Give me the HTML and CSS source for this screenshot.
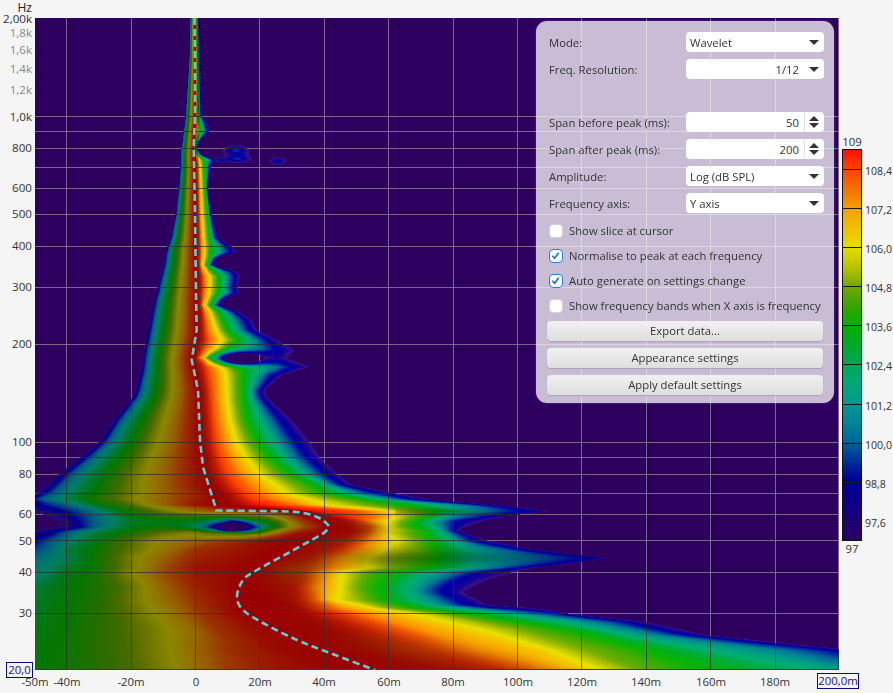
FILE: index.html
```html
<!DOCTYPE html>
<html lang="en">
<head>
<meta charset="utf-8">
<title>Spectrogram</title>
<link rel="stylesheet" href="styles.css">
</head>
<body>
<div class="app">
  <div class="corner">Hz</div>
  <div class="top-gap"></div>
  <div class="top-gap"></div>

  <div class="y-axis">
    <span class="ytick" style="top:1px">2,00k</span>
    <span class="ytick minor" style="top:15px">1,8k</span>
    <span class="ytick minor" style="top:32px">1,6k</span>
    <span class="ytick minor" style="top:51px">1,4k</span>
    <span class="ytick minor" style="top:72px">1,2k</span>
    <span class="ytick" style="top:99px">1,0k</span>
    <span class="ytick" style="top:130px">800</span>
    <span class="ytick" style="top:170px">600</span>
    <span class="ytick" style="top:196px">500</span>
    <span class="ytick" style="top:228px">400</span>
    <span class="ytick" style="top:269px">300</span>
    <span class="ytick" style="top:326px">200</span>
    <span class="ytick" style="top:424px">100</span>
    <span class="ytick" style="top:456px">80</span>
    <span class="ytick" style="top:496px">60</span>
    <span class="ytick" style="top:523px">50</span>
    <span class="ytick" style="top:554px">40</span>
    <span class="ytick" style="top:595px">30</span>
  </div>

  <div class="plot">
    <canvas id="heat" class="heat" width="804" height="652"></canvas>
    <form class="panel">
      <div class="field"><span>Mode:</span><div class="combo"><span class="combo-text">Wavelet</span><i class="arrow"></i></div></div>
      <div class="field"><span>Freq. Resolution:</span><div class="combo"><span class="combo-text end">1/12</span><i class="arrow"></i></div></div>
      <div class="field"></div>
      <div class="field"><span>Span before peak (ms):</span><div class="combo"><span class="combo-text end">50</span><i class="spin"></i></div></div>
      <div class="field"><span>Span after peak (ms):</span><div class="combo"><span class="combo-text end">200</span><i class="spin"></i></div></div>
      <div class="field"><span>Amplitude:</span><div class="combo"><span class="combo-text">Log (dB SPL)</span><i class="arrow"></i></div></div>
      <div class="field"><span>Frequency axis:</span><div class="combo"><span class="combo-text">Y axis</span><i class="arrow"></i></div></div>
      <div class="checks">
        <div class="check"><i class="box"></i>Show slice at cursor</div>
        <div class="check"><i class="box on"><svg viewBox="0 0 14 14"><path d="M3 7.4 6 10.6l5-7" /></svg></i>Normalise to peak at each frequency</div>
        <div class="check"><i class="box on"><svg viewBox="0 0 14 14"><path d="M3 7.4 6 10.6l5-7" /></svg></i>Auto generate on settings change</div>
        <div class="check"><i class="box"></i>Show frequency bands when X axis is frequency</div>
      </div>
      <div class="buttons">
        <div class="btn">Export data...</div>
        <div class="btn">Appearance settings</div>
        <div class="btn">Apply default settings</div>
      </div>
    </form>
  </div>

  <div class="legend">
    <div class="legend-end">109</div>
    <div class="legend-bar">
      <div class="legend-first"></div>
      <div class="legend-cell"><span>108,4</span></div>
      <div class="legend-cell"><span>107,2</span></div>
      <div class="legend-cell"><span>106,0</span></div>
      <div class="legend-cell"><span>104,8</span></div>
      <div class="legend-cell"><span>103,6</span></div>
      <div class="legend-cell"><span>102,4</span></div>
      <div class="legend-cell"><span>101,2</span></div>
      <div class="legend-cell"><span>100,0</span></div>
      <div class="legend-cell"><span>98,8</span></div>
      <div class="legend-cell last"><span>97,6</span></div>
    </div>
    <div class="legend-end">97</div>
  </div>

  <div class="cursor-cell"><span class="cursor-box y-cursor">20,0</span></div>
  <div class="x-axis">
    <span class="xtick" style="left:0">-50m</span>
    <span class="xtick" style="left:32px">-40m</span>
    <span class="xtick" style="left:96px">-20m</span>
    <span class="xtick" style="left:161px">0</span>
    <span class="xtick" style="left:225px">20m</span>
    <span class="xtick" style="left:289px">40m</span>
    <span class="xtick" style="left:354px">60m</span>
    <span class="xtick" style="left:418px">80m</span>
    <span class="xtick" style="left:483px">100m</span>
    <span class="xtick" style="left:547px">120m</span>
    <span class="xtick" style="left:611px">140m</span>
    <span class="xtick" style="left:676px">160m</span>
    <span class="xtick" style="left:740px">180m</span>
    <span class="cursor-box x-cursor">200,0m</span>
  </div>
</div>
<script src="app.js"></script>
</body>
</html>
```

FILE: styles.css
```css
* { box-sizing: border-box; }
html, body { margin: 0; padding: 0; }
body { background: #f5f5f5; font-family: "Open Sans", "Noto Sans", sans-serif; font-size: 11.3px; color: #333; }

.app {
  width: 893px;
  height: 693px;
  display: grid;
  grid-template-columns: 35px 804px 54px;
  grid-template-rows: 18px 652px 23px;
  background: #f5f5f5;
  overflow: hidden;
}

.corner { text-align: right; padding-right: 3px; font-size: 12px; line-height: 15px; color: #222; }

.y-axis { position: relative; }
.ytick { position: absolute; right: 3px; line-height: 14px; color: #333; white-space: nowrap; font-size: 11.6px; transform: translateY(-7px); }
.ytick.minor { color: #8a8a8a; }

.plot { position: relative; background: #2d005f; }
.heat { display: block; width: 804px; height: 652px; }

.panel {
  position: absolute;
  left: 501px;
  top: 3px;
  width: 298px;
  height: 382px;
  margin: 0;
  padding: 11px 11px 8px;
  display: flex;
  flex-direction: column;
  border-radius: 11px;
  background: rgba(255, 255, 255, 0.74);
  box-shadow: 0 0 2px rgba(255, 255, 255, 0.3);
}

.field {
  display: grid;
  grid-template-columns: 139px 138px;
  align-items: center;
  height: 20px;
  margin-bottom: 7px;
  padding-left: 2px;
  margin-left: 0;
  white-space: nowrap;
}
.field > span { color: #333; position: relative; top: 0.5px; }

.combo {
  position: relative;
  height: 20px;
  width: 138px;
  margin-left: -2px;
  background: #fff;
  border-radius: 4px;
  display: flex;
  align-items: center;
  padding: 0 25px 0 4px;
}
.combo-text { flex: 1; color: #333; }
.combo-text.end { text-align: right; }

.arrow {
  position: absolute;
  right: 5px;
  top: 8px;
  width: 0;
  height: 0;
  border-left: 5px solid transparent;
  border-right: 5px solid transparent;
  border-top: 5px solid #333;
}

.spin {
  position: absolute;
  right: 0;
  top: 0;
  width: 20px;
  height: 20px;
  border-left: 1px solid #e2e2e2;
}
.spin::before, .spin::after {
  content: "";
  position: absolute;
  left: 4px;
  border-left: 5px solid transparent;
  border-right: 5px solid transparent;
}
.spin::before { top: 4px; border-bottom: 5px solid #333; }
.spin::after { top: 11px; border-top: 5px solid #333; }

.checks { display: flex; flex-direction: column; margin-top: -2px; margin-bottom: 3px; }
.check {
  display: flex;
  align-items: center;
  height: 25px;
  padding-left: 2px;
  color: #333;
  white-space: nowrap;
}
.box {
  flex: none;
  width: 14px;
  height: 14px;
  margin-right: 6px;
  background: #fff;
  border: 1px solid #d6d0dc;
  border-radius: 4px;
}
.box.on { border: 1.5px solid #2f7fd0; background: #f4f9fe; }
.box svg { display: block; width: 11px; height: 11px; }
.box path { fill: none; stroke: #1f6fc0; stroke-width: 2; }

.buttons { display: flex; flex-direction: column; gap: 7px; }
.btn {
  height: 20px;
  line-height: 20px;
  text-align: center;
  color: #333;
  border-radius: 4px;
  background: linear-gradient(#f1f1f1, #dedede);
  box-shadow: 0 1px 1px rgba(120, 110, 130, 0.35);
}

.legend { padding-left: 3px; position: relative; }
.legend-end { width: 20px; text-align: center; line-height: 14px; color: #333; font-size: 11.4px; }
.legend-end:first-child { margin-top: 117px; }
.legend-bar {
  width: 20px;
  height: 392px;
  border: 1px solid #111;
  display: flex;
  flex-direction: column;
  background: linear-gradient(
    #ff1000 0%, #fa4600 5%, #f57000 10%, #f5a000 15%, #f0c000 20%, #e4de00 25%,
    #b8c400 30%, #70a800 35%, #38a400 40%, #00b000 45%, #00a828 50%,
    #00a854 55%, #00a878 60%, #009a90 65%, #008498 70%, #006498 75%,
    #002c98 80%, #000098 85%, #0a0088 90%, #1c0074 95%, #28006a 100%);
}
.legend-first { flex: 0 0 19px; }
.legend-cell { flex: 0 0 39.1px; border-top: 1px solid #1a1a1a; position: relative; }
.legend-cell span { position: absolute; left: 22px; top: -6px; line-height: 14px; color: #333; font-size: 10.6px; white-space: nowrap; }
.legend-cell.last { flex: 1 1 auto; }
.legend-end:last-child { margin-top: 1px; }

.cursor-cell { position: relative; }
.cursor-box {
  position: absolute;
  border: 1px solid #0a0a80;
  color: #14148a;
  line-height: 14px;
  text-align: center;
  white-space: nowrap;
  font-size: 11.4px;
}
.y-cursor { left: 6px; top: -8px; width: 27px; height: 16px; background: #f5f5f5; }
.x-axis { position: relative; }
.xtick { position: absolute; top: 5px; line-height: 14px; transform: translateX(-50%); white-space: nowrap; color: #333; font-size: 11.4px; }
.x-cursor { left: 782px; top: 3px; width: 42px; height: 16px; background: #f5f5f5; }
```

FILE: app.js
```javascript
// Spectrogram field: each key row gives left edge, ridge, mid contour and right edge
// (plot values in dB, x and y in page pixels; the canvas starts at 35,18).
const X0 = 35, Y0 = 18, W = 804, H = 652;

const stops = [
  [97, 50, 12, 112], [97.3, 52, 16, 140], [97.6, 36, 6, 140], [98.2, 10, 0, 155], [98.8, 0, 0, 165], [99.4, 0, 50, 160],
  [100, 0, 100, 150], [100.6, 0, 135, 145], [101.2, 0, 160, 130], [101.8, 0, 175, 110], [102.4, 0, 172, 70],
  [103, 0, 175, 30], [103.6, 10, 180, 0], [104.2, 60, 172, 0], [104.8, 110, 175, 0], [105.4, 180, 195, 0],
  [106, 230, 225, 0], [106.6, 245, 190, 0], [107.2, 250, 150, 0], [107.8, 255, 90, 0], [108.4, 255, 45, 0], [109, 255, 0, 0]
];

function colour(v) {
  if (v >= 109) return stops[stops.length - 1];
  for (let i = 1; i < stops.length; i++) {
    if (v <= stops[i][0]) {
      const a = stops[i - 1], b = stops[i], t = (v - a[0]) / (b[0] - a[0]);
      return [0, a[1] + (b[1] - a[1]) * t, a[2] + (b[2] - a[2]) * t, a[3] + (b[3] - a[3]) * t];
    }
  }
  return stops[stops.length - 1];
}

function row(y, L, P, C, R, left, right) {
  const pts = [];
  if (left) {
    left.forEach(p => pts.push(p));
  } else {
    for (let i = 0; i < 10; i++) {
      const f = i / 10;
      pts.push([L + f * (P - L), 97 + 12 * Math.pow(f, 0.55)]);
    }
  }
  pts.push([P, 109]);
  if (right) {
    right.forEach(p => pts.push(p));
  } else {
    for (let i = 1; i <= 6; i++) {
      const f = i / 6;
      pts.push([P + f * (C - P), 109 - 5.5 * Math.pow(f, 1.4)]);
    }
  }
  pts.push([R, 97]);
  return { y, L, P, C, R, pts };
}

const keys = [
  row(18, 190, 194.5, 197, 199), row(60, 189, 194.7, 197.5, 200), row(116, 185, 195, 198, 202),
  row(122, 184.5, 194.7, 198.5, 207), row(131, 183, 194, 200, 210), row(143, 181.5, 193.7, 196, 198),
  row(148, 180.5, 193.5, 195.5, 197), row(155, 180, 193.5, 198, 202), row(160, 180, 193.7, 203, 217),
  row(165, 180, 194, 204, 212), row(188, 178, 194.3, 205, 208), row(214, 175, 194.5, 207, 212),
  row(238, 170, 195, 209, 218), row(246, 167, 195, 210, 232), row(252, 165, 195.2, 210, 237),
  row(258, 164, 195.3, 209, 217), row(265, 163, 195.4, 207, 213), row(272, 161, 195.5, 213, 237),
  row(276, 160, 195.6, 218, 240), row(287, 157, 196, 218, 238), row(293, 156, 196, 217, 240),
  row(298, 154, 196.3, 214, 227), row(305, 152.5, 196.5, 210, 220), row(312, 151, 196.7, 218, 240),
  row(320, 149.5, 196.8, 222, 252), row(330, 147.5, 196.7, 227, 257), row(340, 145.5, 195.5, 237, 277),
  row(350, 143.5, 193, 227, 295), row(358, 142, 192, 212, 287), row(367, 141, 193, 243, 310),
  row(375, 139, 195, 243, 283), row(390, 135, 198, 243, 265), row(397, 132, 198.5, 243, 267),
  row(420, 113, 199.5, 247, 292), row(442, 98, 200, 257, 310), row(457, 80, 201.5, 270, 320),
  row(474, 58, 204, 290, 338), row(485, 46, 208, 313, 352), row(493, 36, 215, 325, 395),
  row(499, 22, 216, 360, 428),
  row(505, 35, 216, 410, 533,
    [[35, 98.5], [66, 100.5], [97, 103], [130, 105], [163, 107], [197, 108.7]],
    [[260, 108.8], [300, 107.4], [325, 106], [350, 105.4], [388, 104], [410, 103.3], [433, 102], [483, 100.5], [517, 98.8]]),
  row(511, 35, 297, 440, 553,
    [[35, 97.3], [50, 97.8], [66, 99], [90, 100.8], [110, 102.5], [130, 103.8], [163, 105.4], [197, 107], [250, 108.4]],
    [[333, 108.5], [367, 107.5], [388, 106.3], [410, 105], [433, 103.7], [453, 102.5], [483, 100.8], [517, 99], [533, 98.4]]),
  row(516, 35, 305, 427, 510,
    [[35, 96.8], [60, 97.5], [75, 99], [100, 101], [130, 103.3], [163, 104.3], [197, 104.5], [230, 104.8], [263, 105.2], [285, 107]],
    [[340, 108.7], [377, 107.5], [388, 106.8], [407, 105.2], [427, 103.6], [450, 101], [467, 100], [487, 99]]),
  row(522, 35, 320, 413, 477,
    [[35, 96.5], [66, 97.2], [80, 99], [95, 100.6], [113, 101.5], [130, 102.8], [163, 103.2], [190, 103], [205, 102.2], [220, 100.5], [235, 97.5], [255, 102], [270, 103.5], [285, 105.5], [300, 107.5]],
    [[345, 108.8], [367, 107.5], [388, 106], [413, 103.6], [433, 101], [450, 99], [462, 98.2]]),
  row(527, 35, 328, 412, 465,
    [[35, 96.5], [66, 97.2], [78, 98.4], [95, 100.5], [113, 102], [130, 103], [163, 103.5], [190, 102.5], [205, 100.5], [215, 97.5], [230, 92], [250, 97.5], [262, 101.5], [275, 103.5], [290, 106], [305, 107.5]],
    [[350, 108.8], [373, 107.6], [388, 106], [410, 103.8], [427, 102.6], [440, 100.8], [453, 98.8]]),
  row(531, 35, 325, 427, 457,
    [[35, 97.2], [50, 98], [66, 99.6], [80, 101], [97, 102], [130, 103.7], [163, 104.8], [190, 105], [200, 104.2], [215, 102], [230, 97.5], [250, 100.5], [265, 104.5], [280, 106.5], [297, 108]],
    [[350, 108.9], [367, 108], [388, 106], [407, 104.8], [427, 103.4], [443, 101], [452, 98.8]]),
  row(533, 35, 323, 425, 463,
    [[35, 97.5], [50, 98.5], [63, 100], [80, 101.5], [97, 102.5], [130, 104], [163, 105.2], [190, 105.8], [217, 105], [250, 104.5], [265, 105.3], [280, 107], [297, 108.5]],
    [[350, 108.8], [367, 107.8], [388, 106], [407, 104.6], [427, 103.4], [443, 101.3], [455, 99.5]]),
  row(541, 35, 300, 430, 489,
    [[35, 98.7], [47, 100], [67, 101.5], [97, 103.3], [130, 105], [163, 106.3], [190, 107], [230, 108], [263, 108.8]],
    [[350, 108.3], [377, 107], [397, 106], [420, 104.5], [443, 102.5], [460, 100.5], [470, 99]]),
  row(550, 35, 275, 430, 533,
    [[35, 100], [47, 100.6], [67, 102.4], [97, 103.8], [130, 105.2], [163, 106.5], [197, 108]],
    [[333, 108.5], [367, 107], [388, 105.8], [417, 104.8], [440, 103.3], [473, 101.5], [500, 100.4], [527, 98.3]]),
  row(558, 35, 265, 440, 613,
    [[35, 100.8], [66, 102], [97, 103.8], [130, 105.6], [163, 107], [197, 108.3]],
    [[309, 108.5], [333, 107.5], [367, 106], [390, 105], [417, 104.3], [443, 103.3], [467, 102], [507, 101], [533, 100.3], [567, 99.3], [593, 98.5]]),
  row(568, 35, 255, 430, 535,
    [[35, 101.3], [66, 102.7], [97, 103.8], [130, 105.5], [163, 107.4], [197, 108.6]],
    [[300, 108], [333, 107.3], [343, 107], [367, 106], [388, 105], [417, 104], [443, 103], [473, 101.5], [500, 100], [517, 98.8]]),
  row(572, 35, 250, 395, 515,
    [[35, 101.5], [50, 102], [67, 103.2], [97, 103.9], [125, 105.6], [163, 107.5], [197, 108.6]],
    [[263, 108.8], [300, 108], [333, 106.6], [350, 105.5], [377, 104], [400, 103.5], [417, 102], [440, 101], [460, 100], [480, 98.5]]),
  row(587, 35, 237, 378, 472,
    [[35, 102.5], [66, 103.4], [97, 104], [130, 105.2], [163, 107], [197, 108.3]],
    [[263, 108.9], [297, 108.5], [313, 107.5], [333, 106.6], [350, 105.2], [377, 103.5], [400, 102.2], [417, 101], [440, 99], [457, 98]]),
  row(600, 35, 238, 385, 478,
    [[35, 102.7], [66, 103.5], [97, 104], [140, 105.8], [163, 106.7], [197, 108]],
    [[270, 109], [300, 108.5], [317, 107.5], [333, 106.2], [360, 105], [383, 103.6], [410, 102], [433, 100.6], [450, 99.3], [465, 98.3]]),
  row(608, 35, 243, 420, 533,
    [[35, 102.9], [66, 103.5], [97, 104.1], [130, 105.2], [163, 106.4], [197, 107.8], [230, 108.8]],
    [[297, 108.8], [333, 107.5], [367, 106.3], [388, 105], [417, 103.5], [443, 102], [467, 100.6], [493, 99], [517, 98]]),
  row(613, 35, 248, 455, 570,
    [[35, 103], [66, 103.5], [97, 104.1], [130, 105.2], [163, 106.3], [197, 107.7], [230, 108.7]],
    [[300, 108.8], [333, 108.2], [367, 107.2], [388, 106.6], [417, 105.8], [453, 104], [480, 102.8], [517, 101], [550, 99.3]]),
  row(630, 35, 277, 570, 702,
    [[35, 103.2], [66, 103.6], [97, 104.2], [130, 105], [163, 105.8], [197, 107], [213, 107.8], [250, 108.7]],
    [[333, 108.8], [367, 108.4], [400, 107.8], [423, 107.2], [450, 106.7], [483, 106], [517, 105], [540, 104.3], [570, 103.5], [607, 101.8], [647, 100.3], [680, 98.5]]),
  row(650, 35, 325, 647, 852,
    [[35, 103.4], [66, 103.7], [97, 104.2], [130, 104.9], [170, 106], [197, 107], [230, 108], [280, 108.8]],
    [[367, 108.7], [400, 108.2], [433, 108], [467, 107.4], [500, 107], [533, 106.5], [550, 106], [580, 105], [607, 104.5], [647, 103.5], [707, 101.8], [773, 100.6], [823, 99]]),
  row(670, 35, 375, 700, 1000,
    [[35, 103.5], [66, 103.8], [97, 104.2], [130, 104.8], [175, 106], [197, 106.8], [230, 107.8], [280, 108.6], [330, 108.9]],
    [[433, 108.8], [500, 108.4], [540, 107.5], [607, 105.8], [647, 104.5], [707, 103.5], [773, 102.5], [837, 101.3], [920, 99]])
];

const edges = [];
keys.forEach(k => { if (k.y < 493) edges.push([k.y, k.R]); });
[[493, 395], [500, 433], [507, 517], [511, 553], [516, 510], [520, 487], [525, 470], [531, 457], [535, 470], [540, 487],
 [550, 533], [555, 583], [558, 613], [563, 580], [568, 533], [580, 487], [592, 463], [605, 487], [608, 533], [615, 580],
 [622, 647], [635, 707], [642, 773], [650, 852], [670, 1000]].forEach(e => edges.push(e));

function lookup(table, y) {
  for (let i = 1; i < table.length; i++) {
    if (y <= table[i][0]) {
      const a = table[i - 1], b = table[i];
      return a[1] + (b[1] - a[1]) * (y - a[0]) / (b[0] - a[0]);
    }
  }
  return table[table.length - 1][1];
}

// how far past the ridge the colours stay dim, and how long they take to brighten
const rampStart = [[493, 8], [505, 10], [511, 5], [516, 15], [522, 25], [533, 30], [560, 45], [600, 47], [613, 45], [630, 43], [650, 55], [670, 60]];
const rampWidth = [[493, 25], [505, 40], [511, 20], [516, 30], [522, 45], [533, 50], [560, 50], [600, 50], [613, 70], [630, 110], [650, 140], [670, 170]];

function evalRow(k, x) {
  const p = k.pts;
  if (x <= p[0][0]) {
    const slope = p[0][1] > 97.01 ? 0.05 : 0.4;
    return p[0][1] - (p[0][0] - x) * slope;
  }
  if (x >= k.R) return 97 - (x - k.R) * 0.4;
  for (let i = 1; i < p.length; i++) {
    if (x <= p[i][0]) {
      const a = p[i - 1], b = p[i];
      return a[1] + (b[1] - a[1]) * (x - a[0]) / (b[0] - a[0]);
    }
  }
  return 97;
}

function mapX(x, cur, k) {
  if (x >= cur.C) return k.C + (x - cur.C) / (cur.R - cur.C) * (k.R - k.C);
  if (x >= cur.P) return k.P + (x - cur.P) / (cur.C - cur.P) * (k.C - k.P);
  return k.P - (cur.P - x) / (cur.P - cur.L) * (k.P - k.L);
}

function gauss(x, y, cx, cy, sx, sy) {
  const dx = (x - cx) / sx, dy = (y - cy) / sy;
  return Math.exp(-dx * dx - dy * dy);
}

const canvas = document.getElementById("heat");
const ctx = canvas.getContext("2d");
const img = ctx.createImageData(W, H);
const vals = new Float32Array(W * H);

let ki = 0;
for (let j = 0; j < H; j++) {
  const y = j + Y0 + 0.5;
  while (ki < keys.length - 2 && y > keys[ki + 1].y) ki++;
  const a = keys[ki], b = keys[ki + 1];
  const t = Math.min(1, Math.max(0, (y - a.y) / (b.y - a.y)));
  const cur = {
    L: a.L + (b.L - a.L) * t, P: a.P + (b.P - a.P) * t,
    C: a.C + (b.C - a.C) * t, R: lookup(edges, y)
  };
  if (cur.R <= cur.C + 1) cur.C = cur.R - 1;
  const start = y < 493 ? 3 : lookup(rampStart, y);
  const ramp = y < 493 ? Math.max(3, 0.3 * (cur.C - cur.P)) : lookup(rampWidth, y);
  for (let i = 0; i < W; i++) {
    const x = i + X0 + 0.5;
    let v = evalRow(a, mapX(x, cur, a)) * (1 - t) + evalRow(b, mapX(x, cur, b)) * t;
    if (y > 340 && y < 376 && x > 205 && x < 275) v -= 7.5 * gauss(x, y, 239, 358.5, 22, 6.5);
    if (y > 135 && y < 175) {
      const blob = 96.6 + 2.8 * Math.max(gauss(x, y, 236, 150.5, 10, 4), gauss(x, y, 237, 158.5, 11, 3.2), 0.8 * gauss(x, y, 237, 154.5, 10, 4));
      const blob2 = 96.6 + 2 * gauss(x, y, 278, 161, 7, 3);
      const tail = 96.6 + 2 * gauss(x, y, 222, 160, 6, 2.2);
      v = Math.max(v, blob, blob2, tail);
    }
    vals[j * W + i] = v;
    const off = (j * W + i) * 4;
    if (v < 97) {
      img.data[off] = 45; img.data[off + 1] = 0; img.data[off + 2] = 95; img.data[off + 3] = 255;
      continue;
    }
    let bright;
    if (x < cur.P + start) {
      bright = 0.6 + 0.12 * Math.min(1, Math.max(0, (105 - v) / 3));
    } else {
      const f = Math.min(1, (x - cur.P - start) / ramp);
      bright = 0.6 + 0.4 * f * f * (3 - 2 * f);
    }
    if (x > 320) {
      const win = Math.min(1, (x - 320) / 40);
      bright *= 1 - 0.3 * win * gauss(0, y, 0, 558, 1, 10);
      if (x > 395) bright *= 1 - 0.25 * gauss(0, y, 0, 512, 1, 4);
    }
    const c = colour(v);
    img.data[off] = c[1] * bright;
    img.data[off + 1] = c[2] * bright;
    img.data[off + 2] = c[3] * Math.min(1, bright + 0.15);
    img.data[off + 3] = 255;
  }
}

// grid: light over the empty background, dark and see-through over the coloured field
function gridPixel(i, j) {
  const off = (j * W + i) * 4;
  if (vals[j * W + i] < 97.2) {
    img.data[off] = 122;
    img.data[off + 1] = 104;
    img.data[off + 2] = 138;
  } else {
    img.data[off] = img.data[off] * 0.25 + 35;
    img.data[off + 1] = img.data[off + 1] * 0.25 + 35;
    img.data[off + 2] = img.data[off + 2] * 0.25 + 35;
  }
}
[66, 131, 195, 259, 324, 388, 453, 517, 581, 646, 710, 775].forEach(x => {
  for (let j = 0; j < H; j++) gridPixel(x - X0, j);
});
[1000, 900, 800, 700, 600, 500, 400, 300, 200, 100, 90, 80, 70, 60, 50, 40, 30].forEach(f => {
  const j = Math.round(326 * Math.log10(2000 / f));
  for (let i = 0; i < W; i++) gridPixel(i, j);
});
for (let j = 0; j < H; j++) gridPixel(W - 1, j);
for (let i = 0; i < W; i++) {
  const off = ((H - 1) * W + i) * 4;
  img.data[off] = 60; img.data[off + 1] = 60; img.data[off + 2] = 60;
}
ctx.putImageData(img, 0, 0);

// peak curve
const upper = [[194.5, 18], [195, 60], [195, 116], [193.7, 147], [195, 213], [196, 293], [196.7, 330], [191.7, 360],
  [198, 390], [200, 440], [203, 467], [216.5, 510.5]];
const lower = [[216.5, 510.5], [260, 511], [297, 512], [317, 517], [328, 525], [326, 531], [317, 537], [290, 552], [257, 570],
  [243, 580], [237, 597], [243, 610], [263, 623], [297, 640], [330, 653], [375, 670]];
ctx.strokeStyle = "#62cdd0";
ctx.lineWidth = 2.6;
ctx.setLineDash([7, 4]);
ctx.beginPath();
ctx.moveTo(upper[0][0] - X0, upper[0][1] - Y0);
upper.slice(1).forEach(p => ctx.lineTo(p[0] - X0, p[1] - Y0));
for (let i = 0; i < lower.length - 1; i++) {
  const p0 = lower[Math.max(0, i - 1)], p1 = lower[i], p2 = lower[i + 1], p3 = lower[Math.min(lower.length - 1, i + 2)];
  ctx.bezierCurveTo(
    p1[0] + (p2[0] - p0[0]) / 6 - X0, p1[1] + (p2[1] - p0[1]) / 6 - Y0,
    p2[0] - (p3[0] - p1[0]) / 6 - X0, p2[1] - (p3[1] - p1[1]) / 6 - Y0,
    p2[0] - X0, p2[1] - Y0);
}
ctx.stroke();
```
